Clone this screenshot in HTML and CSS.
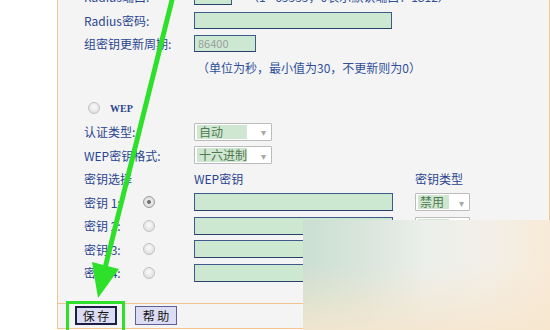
FILE: index.html
```html
<!DOCTYPE html>
<html lang="zh-CN">
<head>
    <meta charset="UTF-8">
    <title>无线安全设置</title>
    <link rel="stylesheet" href="styles.css">
</head>
<body>

    <div class="panel">
        <div class="form">
            <div class="row">
                <span class="lbl">Radius端口:</span>
                <span class="txt port"></span>
                <span class="hint port-hint">（1 - 65535，0表示默认端口：1812）</span>
            </div>
            <div class="row">
                <span class="lbl">Radius密码:</span>
                <span class="txt wide"></span>
            </div>
            <div class="row">
                <span class="lbl">组密钥更新周期:</span>
                <span class="txt period">86400</span>
            </div>
            <div class="row">
                <span class="lbl"></span>
                <span class="hint">（单位为秒，最小值为30，不更新则为0）</span>
            </div>

            <div class="spacer"></div>

            <div class="row">
                <span class="radio wep-radio"></span>
                <span class="wep-title">WEP</span>
            </div>
            <div class="row">
                <span class="lbl">认证类型:</span>
                <span class="sel"><span class="opt">自动</span><span class="arrow">▾</span></span>
            </div>
            <div class="row">
                <span class="lbl">WEP密钥格式:</span>
                <span class="sel"><span class="opt">十六进制</span><span class="arrow">▾</span></span>
            </div>
            <div class="row">
                <span class="lbl">密钥选择</span>
                <span class="col-key">WEP密钥</span>
                <span class="col-type">密钥类型</span>
            </div>
            <div class="row">
                <span class="lbl key-lbl">密钥 1:<span class="radio checked"></span></span>
                <span class="txt key"></span>
                <span class="sel small"><span class="opt">禁用</span><span class="arrow">▾</span></span>
            </div>
            <div class="row">
                <span class="lbl key-lbl">密钥 2:<span class="radio"></span></span>
                <span class="txt key"></span>
                <span class="sel small"><span class="opt">禁用</span><span class="arrow">▾</span></span>
            </div>
            <div class="row">
                <span class="lbl key-lbl">密钥 3:<span class="radio"></span></span>
                <span class="txt key"></span>
                <span class="sel small"><span class="opt">禁用</span><span class="arrow">▾</span></span>
            </div>
            <div class="row">
                <span class="lbl key-lbl">密钥 4:<span class="radio"></span></span>
                <span class="txt key"></span>
                <span class="sel small"><span class="opt">禁用</span><span class="arrow">▾</span></span>
            </div>
        </div>

        <div class="actions">
            <button class="btn focus">保 存</button>
            <button class="btn">帮 助</button>
        </div>
    </div>

    <!-- watermark blur in the corner -->
    <div class="smear"></div>

    <!-- green annotation -->
    <svg class="mark" width="550" height="330" viewBox="0 0 550 330">
        <line x1="173" y1="-4" x2="105" y2="268" stroke="#2fe02a" stroke-width="5"/>
        <polygon points="98,298 92,262 119,269" fill="#2fe02a"/>
        <rect x="67.5" y="302.5" width="56" height="30" fill="none" stroke="#2fe02a" stroke-width="3"/>
    </svg>

</body>
</html>
```

FILE: styles.css
```css
body{
    margin: 0;
    background: #fff;
    font-family: "Noto Sans CJK SC", "Liberation Sans", sans-serif;
    font-size: 12px;
    color: #2b4590;
    overflow: hidden;
}

.panel{
    margin-top: -15px;
    margin-left: 57px;
    width: 491px;
    background: #f4f4f4;
    border-left: 1px solid #f0c592;
    border-right: 1px solid #f0c592;
}

.form{
    padding: 0 0 18.5px 26px;
}

.row{
    display: flex;
    align-items: center;
    height: 23.5px;
}

.spacer{
    height: 17.25px;
}

.lbl{
    width: 110px;
    flex: none;
    white-space: nowrap;
}

.key-lbl{
    display: flex;
    align-items: center;
}

.key-lbl .radio{
    margin-left: 22px;
}

.txt{
    display: block;
    box-sizing: border-box;
    height: 17px;
    background: #cde8d1;
    border: 1px solid #3d5a8c;
    border-bottom-color: #2a3f6a;
    color: #9aa09c;
    font-size: 11px;
    line-height: 15px;
    padding-left: 3px;
}

.port{ width: 38px; }
.wide{ width: 198px; }
.period{ width: 62px; }
.key{ width: 199px; height: 18px; }

.hint{
    margin-left: 3px;
    white-space: nowrap;
    color: #30509a;
}

.port-hint{
    margin-left: 15px;
}

.radio{
    display: inline-block;
    box-sizing: border-box;
    width: 12px;
    height: 12px;
    border-radius: 50%;
    border: 1px solid #c2c2c2;
    background: radial-gradient(circle at 50% 40%, #fbfbfb 0%, #e2e2e2 70%, #d2d2d2 100%);
}

.radio.checked{
    border-color: #9c9c9c;
    background: radial-gradient(circle, #6e6e6e 0%, #7a7a7a 25%, #ececec 32%, #dcdcdc 70%, #c8c8c8 100%);
}

.wep-radio{
    margin-left: 4px;
}

.wep-title{
    margin-left: 10px;
    font-size: 10px;
    font-weight: bold;
    font-family: "Liberation Serif", serif;
}

.sel{
    display: flex;
    align-items: center;
    box-sizing: border-box;
    width: 78px;
    height: 18px;
    background: #fff;
    border: 1px solid #bcbcbc;
    border-radius: 1px;
    padding: 1px 2px;
    font-size: 12px;
}

.sel .opt{
    flex: 1;
    height: 14px;
    line-height: 14px;
    background: #cfe6d0;
    color: #507a52;
    padding-left: 2px;
    margin-right: 14px;
}

.sel .arrow{
    color: #a8a8a8;
    font-size: 10px;
    width: 8px;
}

.sel.small{
    width: 55px;
    margin-left: 22px;
}

.sel.small .opt{
    margin-right: 10px;
}

.col-key{
    width: 221px;
    flex: none;
}

.actions{
    border-top: 1px solid #f0c592;
    border-bottom: 1px solid #f0c592;
    height: 24px;
    display: flex;
    align-items: center;
    gap: 18px;
    padding-left: 17px;
}

.btn{
    box-sizing: border-box;
    width: 42px;
    height: 19px;
    padding: 0;
    background: #dcdcf3;
    border: 1px solid #5e6294;
    color: #141414;
    font-family: "Noto Sans CJK SC", sans-serif;
    font-size: 12px;
    line-height: 15px;
}

.btn.focus{
    border: 2px solid #1a1f45;
}

.smear{
    position: absolute;
    left: 303px;
    top: 220px;
    width: 247px;
    height: 110px;
    background:
        linear-gradient(to bottom, rgba(246,230,206,0) 40%, rgba(246,230,206,0.85) 100%),
        linear-gradient(to right, #cbdfd2 0%, #d9e5dc 25%, #ecefeb 50%, #f3efe8 75%, #f8ead7 100%);
}

.mark{
    position: absolute;
    left: 0;
    top: 0;
    pointer-events: none;
}
```
